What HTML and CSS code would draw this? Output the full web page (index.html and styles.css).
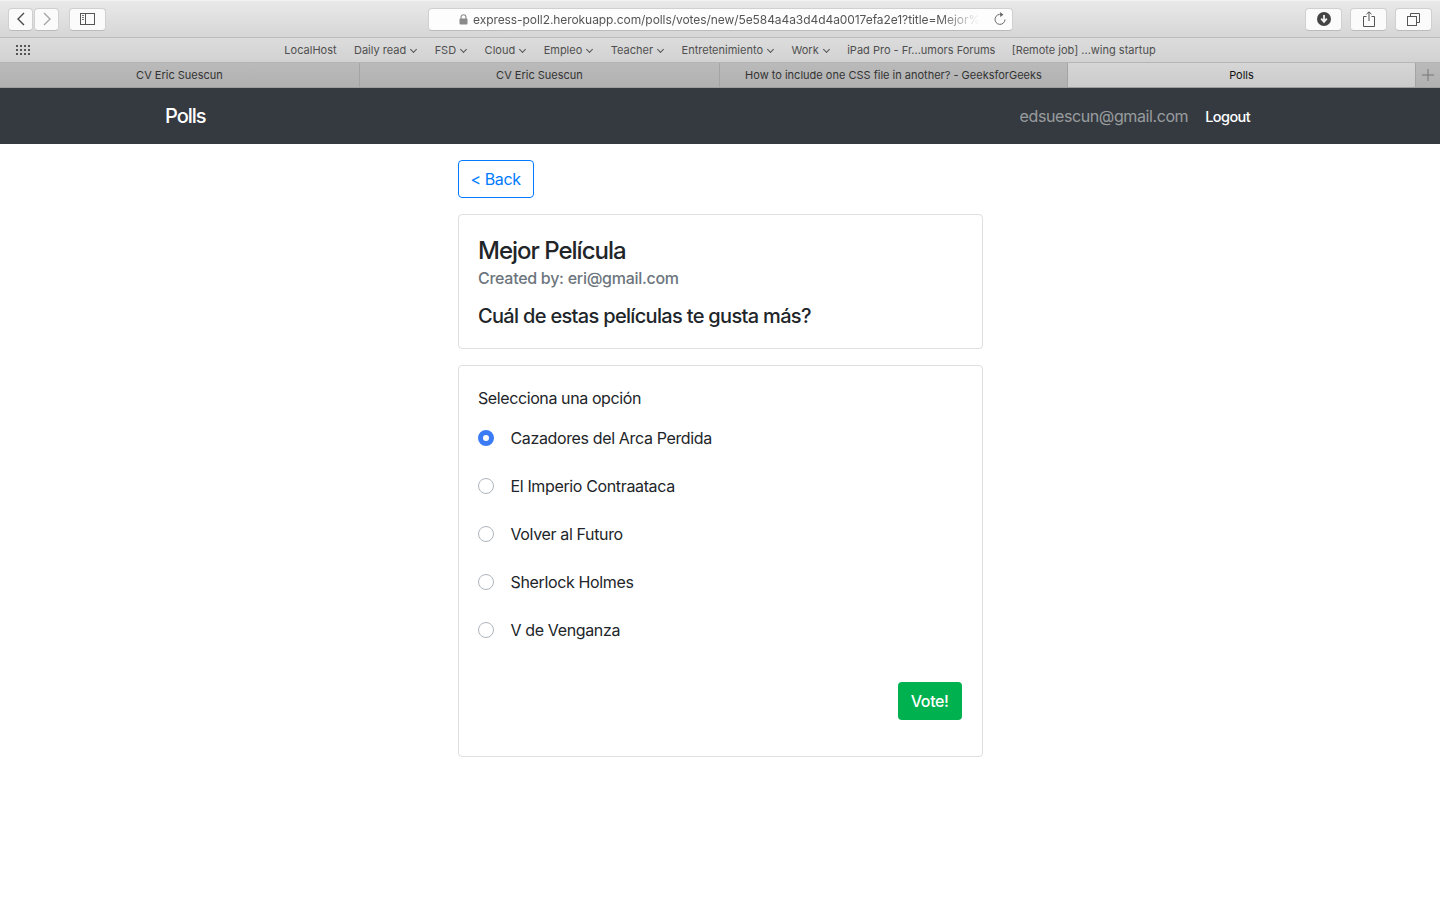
FILE: index.html
```html
<!DOCTYPE html>
<html lang="en">
<head>
    <meta charset="UTF-8">
    <title>Polls</title>
    <link rel="stylesheet" href="styles.css">
</head>
<body>
    <!-- Safari chrome -->
    <div class="toolbar">
        <div class="toolbar-left">
            <div class="nav-group">
                <button class="tool-btn nav-btn"><svg width="10" height="14" viewBox="0 0 10 14"><path d="M8 1L2 7l6 6" fill="none" stroke="#4a4a4a" stroke-width="1.4"/></svg></button>
                <button class="tool-btn nav-btn"><svg width="10" height="14" viewBox="0 0 10 14"><path d="M2 1l6 6-6 6" fill="none" stroke="#a5a5a5" stroke-width="1.4"/></svg></button>
            </div>
            <button class="tool-btn side-btn"><svg width="15" height="12" viewBox="0 0 15 12"><rect x="0.5" y="0.5" width="14" height="11" fill="none" stroke="#555"/><path d="M5.5 0.5v11" stroke="#555"/><path d="M2 2.5h2M2 4.5h2M2 6.5h2" stroke="#777"/></svg></button>
        </div>
        <div class="address">
            <svg class="lock" width="9" height="11" viewBox="0 0 9 11"><path d="M2 5V3.2a2.5 2.5 0 0 1 5 0V5" fill="none" stroke="#8a8a8a" stroke-width="1.1"/><rect x="0.5" y="4.5" width="8" height="6" rx="1" fill="#8a8a8a"/></svg>
            <span class="url">express-poll2.herokuapp.com/polls/votes/new/5e584a4a3d4d4a0017efa2e1?title=Mejor%</span>
            <svg class="reload" width="12" height="14" viewBox="0 0 12 14"><path d="M7.5 2.6A5 5 0 1 0 11 7.5" fill="none" stroke="#666" stroke-width="1"/><path d="M6.2 0l3.2 2.7-3.2 2.3z" fill="#666"/></svg>
        </div>
        <div class="toolbar-right">
            <button class="tool-btn right-btn"><svg width="14" height="14" viewBox="0 0 14 14"><circle cx="7" cy="7" r="7" fill="#444"/><path d="M7 3v6M4.2 6.6L7 9.8l2.8-3.2" fill="none" stroke="#f4f4f4" stroke-width="1.8"/></svg></button>
            <button class="tool-btn right-btn"><svg width="12" height="16" viewBox="0 0 12 16"><path d="M3.5 5.5H.5v10h11v-10h-3" fill="none" stroke="#555"/><path d="M6 10V1M3.5 3.2L6 .8l2.5 2.4" fill="none" stroke="#555"/></svg></button>
            <button class="tool-btn right-btn"><svg width="13" height="13" viewBox="0 0 13 13"><rect x="0.5" y="3.5" width="9" height="9" fill="none" stroke="#555"/><path d="M3.5 3.5v-3h9v9h-3" fill="none" stroke="#555"/></svg></button>
        </div>
    </div>

    <div class="bookmarks">
        <svg class="apps" width="15" height="11" viewBox="0 0 15 11" fill="#555"><rect x="0" y="0" width="2" height="2"/><rect x="4" y="0" width="2" height="2"/><rect x="8" y="0" width="2" height="2"/><rect x="12" y="0" width="2" height="2"/><rect x="0" y="4" width="2" height="2"/><rect x="4" y="4" width="2" height="2"/><rect x="8" y="4" width="2" height="2"/><rect x="12" y="4" width="2" height="2"/><rect x="0" y="8" width="2" height="2"/><rect x="4" y="8" width="2" height="2"/><rect x="8" y="8" width="2" height="2"/><rect x="12" y="8" width="2" height="2"/></svg>
        <a class="bookmark-first">LocalHost</a>
        <a>Daily read <i class="chev"></i></a>
        <a>FSD <i class="chev"></i></a>
        <a>Cloud <i class="chev"></i></a>
        <a>Empleo <i class="chev"></i></a>
        <a>Teacher <i class="chev"></i></a>
        <a>Entretenimiento <i class="chev"></i></a>
        <a>Work <i class="chev"></i></a>
        <a>iPad Pro - Fr...umors Forums</a>
        <a>[Remote job] ...wing startup</a>
    </div>

    <div class="tabs">
        <div class="tab tab-a">CV Eric Suescun</div>
        <div class="tab tab-a">CV Eric Suescun</div>
        <div class="tab tab-b">How to include one CSS file in another? - GeeksforGeeks</div>
        <div class="tab tab-active">Polls</div>
        <div class="tab-new"><svg width="12" height="12" viewBox="0 0 12 12"><path d="M6 0v12M0 6h12" stroke="#777"/></svg></div>
    </div>

    <!-- App -->
    <nav class="navbar">
        <a class="brand">Polls</a>
        <div class="nav-right">
            <span class="nav-email">edsuescun@gmail.com</span>
            <a class="nav-logout">Logout</a>
        </div>
    </nav>

    <main class="content">
        <a class="btn-back">&lt; Back</a>

        <section class="card">
            <h4 class="poll-title">Mejor Película</h4>
            <div class="poll-author">Created by: eri@gmail.com</div>
            <h5 class="poll-question">Cuál de estas películas te gusta más?</h5>
        </section>

        <form class="card vote-card">
            <div class="vote-label">Selecciona una opción</div>
            <div class="options">
                <label class="option"><input type="radio" name="option" checked><span class="radio"></span>Cazadores del Arca Perdida</label>
                <label class="option"><input type="radio" name="option"><span class="radio"></span>El Imperio Contraataca</label>
                <label class="option"><input type="radio" name="option"><span class="radio"></span>Volver al Futuro</label>
                <label class="option"><input type="radio" name="option"><span class="radio"></span>Sherlock Holmes</label>
                <label class="option"><input type="radio" name="option"><span class="radio"></span>V de Venganza</label>
            </div>
            <div class="vote-actions">
                <button type="button" class="btn-vote">Vote!</button>
            </div>
        </form>
    </main>
</body>
</html>
```

FILE: styles.css
```css
* {
    box-sizing: border-box;
}

body {
    margin: 0;
    background-color: #fff;
    color: #212529;
    font-family: 'Inter', 'Liberation Sans', sans-serif;
    font-size: 16px;
    letter-spacing: -0.4px;
}

/* browser toolbar */
.toolbar {
    height: 38px;
    display: flex;
    align-items: center;
    padding: 0 8px;
    background: linear-gradient(#e9e9e9, #d6d6d6);
    border-top: 1px solid #f2f2f2;
    border-bottom: 1px solid #bcbcbc;
    letter-spacing: normal;
}

.toolbar-left {
    width: 420px;
    display: flex;
    gap: 10px;
}

.nav-group {
    display: flex;
    gap: 1px;
}

.tool-btn {
    height: 23px;
    padding: 0;
    display: flex;
    align-items: center;
    justify-content: center;
    background-color: #fbfbfb;
    border: 1px solid #d0d0d0;
    border-bottom-color: #bbb;
    border-radius: 4px;
}

.nav-btn {
    width: 25px;
}

.side-btn {
    width: 37px;
}

.address {
    width: 585px;
    height: 23px;
    display: flex;
    align-items: center;
    padding: 0 6px 0 30px;
    background-color: #fdfdfd;
    border: 1px solid #d0d0d0;
    border-bottom-color: #bbb;
    border-radius: 4px;
    font-size: 12px;
    letter-spacing: -0.07px;
    color: #555;
    white-space: nowrap;
}

.lock {
    margin-right: 5px;
    flex-shrink: 0;
}

.url {
    flex: 1;
    margin-right: 14px;
    overflow: hidden;
    -webkit-mask-image: linear-gradient(to right, #000 92%, transparent);
    mask-image: linear-gradient(to right, #000 92%, transparent);
}

.reload {
    flex-shrink: 0;
}

.toolbar-right {
    margin-left: auto;
    display: flex;
    gap: 8px;
}

.right-btn {
    width: 37px;
}

/* bookmarks */
.bookmarks {
    height: 25px;
    display: flex;
    align-items: center;
    justify-content: center;
    gap: 16.4px;
    position: relative;
    background: linear-gradient(#dcdcdc, #d2d2d2);
    border-bottom: 1px solid #b5b5b5;
    font-size: 11px;
    letter-spacing: normal;
    color: #4f4f4f;
}

.bookmark-first {
    margin-right: 1px;
}

.apps {
    position: absolute;
    left: 16px;
    top: 7px;
}

.chev {
    display: inline-block;
    width: 5px;
    height: 5px;
    margin: 0 2px 2px 2px;
    border-right: 1.3px solid #555;
    border-bottom: 1.3px solid #555;
    transform: rotate(45deg);
}

/* tabs */
.tabs {
    height: 25px;
    display: flex;
    background: linear-gradient(#bababa, #b1b1b1);
    border-bottom: 1px solid #9e9e9e;
    font-size: 11px;
    letter-spacing: normal;
    color: #333;
}

.tab {
    display: flex;
    align-items: center;
    justify-content: center;
    border-right: 1px solid #a4a4a4;
    white-space: nowrap;
}

.tab-a {
    width: 360px;
}

.tab-b {
    width: 348px;
}

.tab-active {
    width: 348px;
    background: linear-gradient(#d6d6d6, #cbcbcb);
    color: #111;
}

.tab-new {
    flex: 1;
    display: flex;
    align-items: center;
    justify-content: center;
}

/* navbar */
.navbar {
    height: 56px;
    display: flex;
    align-items: center;
    justify-content: space-between;
    padding: 0 190px 0 165px;
    background-color: #343a40;
}

.brand {
    color: #fff;
    font-size: 20px;
    font-weight: 500;
    letter-spacing: -1px;
}

.nav-right {
    display: flex;
    align-items: center;
    gap: 17px;
}

.nav-email {
    color: rgba(255, 255, 255, 0.5);
}

.nav-logout {
    color: #fff;
    font-size: 14.5px;
    font-weight: 500;
    letter-spacing: -0.6px;
}

/* page */
.content {
    width: 525px;
    margin: 0 auto;
    padding-top: 16px;
}

.btn-back {
    display: inline-block;
    height: 38px;
    padding: 0 12px;
    line-height: 36px;
    color: #007bff;
    border: 1px solid #007bff;
    border-radius: 4px;
}

.card {
    margin-top: 16px;
    padding: 21px 20px 20px 19.5px;
    background-color: #fff;
    border: 1px solid #dfdfdf;
    border-radius: 4px;
}

.poll-title {
    margin: 0;
    font-size: 24px;
    font-weight: 500;
    line-height: 29px;
    letter-spacing: -1px;
}

.poll-author {
    margin-top: 1px;
    font-weight: 500;
    color: #6c757d;
    line-height: 24px;
    letter-spacing: -0.28px;
}

.poll-question {
    margin: 14px 0 0 0;
    font-size: 20px;
    font-weight: 500;
    line-height: 24px;
    letter-spacing: -0.68px;
}

.vote-card {
    height: 392px;
    padding-top: 20px;
}

.vote-label {
    line-height: 24px;
}

.options {
    margin-top: 4px;
}

.option {
    height: 48px;
    display: flex;
    align-items: center;
    letter-spacing: -0.36px;
}

.option input {
    display: none;
}

.radio {
    width: 16px;
    height: 16px;
    margin: 0 17px 0 -0.5px;
    border: 1px solid #adb5bd;
    border-radius: 50%;
    background-color: #fff;
}

.option input:checked + .radio {
    border: 5px solid #3b7cf5;
}

.vote-actions {
    display: flex;
    justify-content: flex-end;
    margin-top: 28px;
}

.btn-vote {
    height: 38px;
    padding: 0 13px;
    border: none;
    border-radius: 4px;
    background-color: #00b14f;
    color: #fff;
    font-family: inherit;
    font-size: 16px;
    font-weight: 500;
    letter-spacing: -0.4px;
}
```
